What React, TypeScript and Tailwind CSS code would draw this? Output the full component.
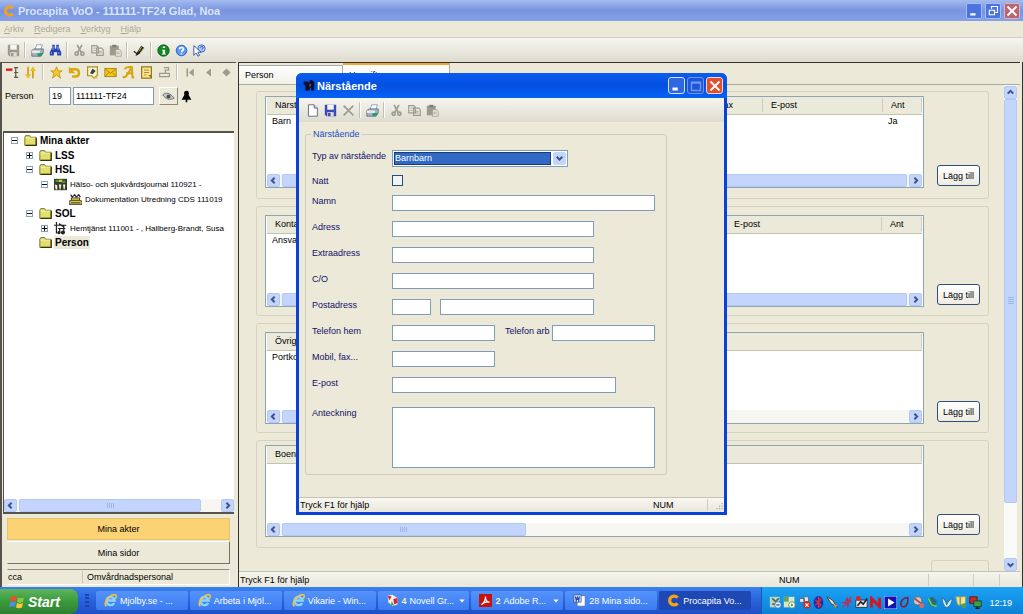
import React from 'react';

type Children = { children?: React.ReactNode };

const Svg = ({ children, size = 'size-[13px]' }: Children & { size?: string }) => (
  <svg viewBox="0 0 16 16" className={`${size} shrink-0`} fill="none" aria-hidden="true">
    {children}
  </svg>
);

/* ---------- Icons ---------- */

const SaveIcon = ({ color = '#9d9b8e' }: { color?: string }) => (
  <Svg>
    <path d="M1 1h14v14H3l-2-2z" fill={color} />
    <path d="M4 1h8v6H4z" fill="#f4f4f0" />
    <path d="M4 10h8v5H4z" fill="#dcdcd6" />
    <path d="M5 11h3v4H5z" fill={color} />
  </Svg>
);

const PrinterIcon = () => (
  <Svg>
    <path d="M5 7l2-6h7l-2 6z" fill="#fff" stroke="#8795a5" />
    <path d="M1 8l3-2h11v5l-3 4H1z" fill="#a9b3bd" stroke="#5d6b7a" />
    <path d="M1 8h10v3H1z" fill="#e5e9ee" />
    <path d="M8 11h7l-2 4H8z" fill="#2a9d6c" />
  </Svg>
);

const BinocularsIcon = () => (
  <Svg>
    <path d="M4 1h3v4l1 1 1-1V1h3v3l3 6v4h-5v-4H6v4H1v-4l3-6z" fill="#2443b5" />
    <path d="M5 3v4M11 3v4M3 10v2M12 10v2" stroke="#b9c9f6" />
  </Svg>
);

const CutIcon = () => (
  <Svg>
    <path d="M5 1l5 9M11 1L6 10" stroke="#9d9b8e" strokeWidth="2" />
    <circle cx="4.500" cy="12" r="2" stroke="#9d9b8e" strokeWidth="2" />
    <circle cx="11.500" cy="12" r="2" stroke="#9d9b8e" strokeWidth="2" />
  </Svg>
);

const CopyIcon = () => (
  <Svg>
    <path d="M1 2h6l2 2v7H1zM7 5h6l2 2v7H7z" fill="#ecebe3" stroke="#9d9b8e" strokeWidth="1.500" />
    <path d="M3 5h4M3 8h3M9 9h4M9 11h4" stroke="#9d9b8e" />
  </Svg>
);

const PasteIcon = () => (
  <Svg>
    <path d="M1 2h11v12H1z" fill="#9d9b8e" />
    <path d="M4 1h5v3H4z" fill="#7f7d72" />
    <path d="M8 7h5l2 2v6H8z" fill="#ecebe3" stroke="#9d9b8e" />
    <path d="M9 10h4M9 12h4" stroke="#9d9b8e" />
  </Svg>
);

const PenIcon = () => (
  <Svg>
    <path d="M3 15l2-5 5-8 4 3-6 7z" fill="#222" />
    <path d="M7 9l4-6M9 11l4-6" stroke="#d8c75a" />
    <path d="M1 9l5 4" stroke="#222" strokeWidth="1.500" />
  </Svg>
);

const InfoIcon = () => (
  <Svg>
    <circle cx="8" cy="8" r="7" fill="#0c8a1d" stroke="#064d0e" />
    <path d="M7 3h3v2H7zM6 7h4v5h1v1H6v-1h1V8H6z" fill="#fff" />
  </Svg>
);

const HelpIcon = () => (
  <Svg>
    <circle cx="8" cy="8" r="6.500" fill="#5a9bf0" stroke="#1b50b8" />
    <path d="M5.500 6.500c0-3 5-3 5 0C10.500 8 8 8 8 10M8 11.500v1.500" stroke="#fff" strokeWidth="2" />
  </Svg>
);

const PointerHelpIcon = () => (
  <Svg>
    <circle cx="10.500" cy="5.500" r="4.500" fill="#a9c8f6" stroke="#2a5bbd" />
    <path d="M9 4.500c0-2 3.500-2 3.500 0 0 1-1.500 1-1.500 2.500" stroke="#1b3f9b" />
    <path d="M1 2v12l3-3 2 4 2-1-2-4h4z" fill="#fff" stroke="#1d3f91" />
  </Svg>
);

const NewIcon = () => (
  <Svg>
    <path d="M3 1h7l4 4v10H3z" fill="#fff" stroke="#47566e" />
    <path d="M10 1v4h4" fill="#cfd9e8" stroke="#47566e" />
  </Svg>
);

const DeleteIcon = () => (
  <Svg>
    <path d="M2 2l12 12M14 2L2 14" stroke="#9d9b8e" strokeWidth="2" />
  </Svg>
);

const TreeToggleIcon = () => (
  <Svg>
    <path d="M0 3h8v3H0z" fill="#e02020" />
    <path d="M10 2h5M12 2v12M10 14h5M10 8h5" stroke="#555" strokeWidth="1.500" />
  </Svg>
);

const SortIcon = () => (
  <Svg>
    <path d="M5 1v13M11 15V2" stroke="#c99a08" strokeWidth="2" />
    <path d="M1 10l4 5 4-5zM7 6l4-5 4 5z" fill="#eebc1e" />
  </Svg>
);

const StarIcon = () => (
  <Svg>
    <path d="M8 1l2 5h5l-4 3 2 6-5-4-5 4 2-6-4-3h5z" fill="#f8cb1c" stroke="#c08d08" />
  </Svg>
);

const UndoIcon = () => (
  <Svg>
    <path d="M3 4h6c6 0 6 9 0 9H5" stroke="#dba90d" strokeWidth="3" />
    <path d="M1 1v8h8z" fill="#dba90d" />
  </Svg>
);

const EditPageIcon = () => (
  <Svg>
    <path d="M2 1h12v10l-4 4-3-3H2z" fill="#fff7c9" stroke="#a8902d" strokeWidth="1.500" />
    <path d="M5 9l3-6 4 3-4 4z" fill="#36405a" />
    <path d="M9 13h5v2H9z" fill="#e1b923" />
  </Svg>
);

const MailIcon = () => (
  <Svg>
    <path d="M1 3h14v10H1z" fill="#f5c51c" stroke="#a37b05" />
    <path d="M1 3l7 6 7-6M1 13l5-5M15 13l-5-5" stroke="#a37b05" />
  </Svg>
);

const ScriptAIcon = () => (
  <Svg>
    <path d="M1 13c3 3 7-4 11-12l1 13h2M5 9h8M3 4c2-3 5-3 9-3" stroke="#d9a50c" strokeWidth="2.500" />
  </Svg>
);

const NoteIcon = () => (
  <Svg>
    <path d="M2 1h12v14H2z" fill="#fae691" stroke="#96781a" strokeWidth="1.500" />
    <path d="M5 5h6M5 8h6M5 11h3" stroke="#96781a" />
    <path d="M10 11h4v4z" fill="#96781a" />
  </Svg>
);

const StampIcon = () => (
  <Svg>
    <path d="M7 2h6v3H9v4M2 9h12v4H2z" stroke="#9d9b8e" strokeWidth="1.500" />
  </Svg>
);

const FirstIcon = () => (
  <Svg>
    <path d="M4 3v10" stroke="#9d9b8e" strokeWidth="2" />
    <path d="M12 3v10L6 8z" fill="#9d9b8e" />
  </Svg>
);

const PrevIcon = () => (
  <Svg>
    <path d="M11 3v10L5 8z" fill="#9d9b8e" />
  </Svg>
);

const DiamondIcon = () => (
  <Svg>
    <path d="M8 3l5 5-5 5-5-5z" fill="#9d9b8e" />
  </Svg>
);

const EyeIcon = () => (
  <Svg>
    <path d="M1 6c4-4 9-2 14 4-5 3-11 1-14-4z" fill="#c9cdd0" stroke="#555b60" />
    <circle cx="8" cy="8" r="2.500" fill="#4b5358" />
  </Svg>
);

const PawnIcon = () => (
  <Svg>
    <circle cx="8" cy="4" r="3" fill="#000" />
    <path d="M6 5h4l4 7H9v3H7v-3H2z" fill="#000" />
  </Svg>
);

const ProcapitaIcon = ({ size }: { size?: string }) => (
  <Svg size={size}>
    <path d="M13 4.500A5.500 5.500 0 1 0 13 11.500" stroke="#f5a21b" strokeWidth="4" />
  </Svg>
);

const FolderIcon = () => (
  <Svg>
    <path d="M1 4l1-2h5l1 2h7v10H1z" fill="#e2e06a" stroke="#5e5c12" />
    <path d="M2 5h12" stroke="#fbfac2" />
    <path d="M15 5v9H2" stroke="#33320a" strokeWidth="1.500" />
  </Svg>
);

const JournalIcon = () => (
  <Svg>
    <path d="M0 1h16v14H0z" fill="#3a3a2c" />
    <path d="M2 2h4v3H2zM10 3h4v3h-4z" fill="#2f9c43" />
    <path d="M6 2h4v3H6z" fill="#e1c52d" />
    <path d="M1 8l3 1v5H2zM6 8h3l-1 6H7zM11 8h3l-1 6h-1z" fill="#f4f2dc" />
  </Svg>
);

const DocumentationIcon = () => (
  <Svg>
    <path d="M2 2l2 3 3-3 2 3 3-3 2 3" stroke="#222" strokeWidth="1.500" />
    <path d="M3 6h10v3l3 1v4H0v-4l3-1z" fill="#d8d04a" stroke="#222" />
    <path d="M3 9h10M2 12h12" stroke="#222" />
  </Svg>
);

const HomeCareIcon = () => (
  <Svg>
    <path d="M3 0v14M0 4h15M6 2l6 4M12 4v9M5 8h9M7 8v6" stroke="#222" strokeWidth="1.500" />
    <circle cx="11" cy="13" r="2.500" fill="#222" />
    <circle cx="6" cy="13" r="2" fill="#222" />
  </Svg>
);

const IeIcon = () => (
  <Svg>
    <path d="M12.500 11A5 5 0 1 1 13 8H4" stroke="#8ad4ff" strokeWidth="3" />
    <path d="M3 15C-2 12 7 0 14 1c2 1 1 3 0 5" stroke="#f3c53a" strokeWidth="2" />
  </Svg>
);

const NovellIcon = () => (
  <Svg>
    <path d="M2 2l6-1 6 4v8l-6 2-5-5z" fill="#f3efe9" />
    <path d="M2 2l5 1-3 5zM9 6l5-1v6l-4 2z" fill="#d22b2b" />
    <path d="M7 9l3 5H6z" fill="#3b9e3b" />
  </Svg>
);

const AdobeIcon = () => (
  <Svg>
    <path d="M0 0h16v16H0z" fill="#c5130f" />
    <path d="M3 13c3-2 5-6 5-10 0 4 2 7 5 7-4-1-7 0-10 3z" stroke="#fff" strokeWidth="1.500" />
  </Svg>
);

const WordIcon = () => (
  <Svg>
    <path d="M5 2h10v13H5z" fill="#fff" stroke="#5671b3" />
    <path d="M1 1h9v9H1z" fill="#e7edfb" stroke="#2a4da3" />
    <path d="M3 3l1 5 1.500-4L7 8l1-5" stroke="#2a4da3" strokeWidth="1.500" />
  </Svg>
);

const WindowsFlag = () => (
  <Svg size="size-4">
    <path d="M2 3c2-1.500 4-1 6 0L7 7.500c-2-1-4-1-6 0z" fill="#e9512b" />
    <path d="M9 3.500c2 1 4 1 6 0L14 8c-2 1-4 1-6 0z" fill="#8cc63f" />
    <path d="M1 8.500c2-1 4-1 6 0L6 13c-2-1-4-1-6 0z" fill="#4d8fe8" />
    <path d="M8 9c2 1 4 1 6 0l-1 4.500c-2 1-4 1-6 0z" fill="#fbc82e" />
  </Svg>
);

/* ---------- Shared controls ---------- */

const ToolButton = ({ label, children }: Children & { label: string }) => (
  <button type="button" aria-label={label} title={label} className="flex h-[18px] w-[18px] shrink-0 items-center justify-center">
    {children}
  </button>
);

const Divider = ({ wide = false }: { wide?: boolean }) => (
  <span className={`h-4 w-[2px] shrink-0 border-l border-r border-l-[#c3c0b0] border-r-white ${wide ? 'mx-[3px]' : 'mx-[2px]'}`} />
);

const Arrow = ({ dir }: { dir: 'left' | 'right' | 'up' | 'down' }) => {
  const paths = {
    left: 'M10 3L5 8l5 5',
    right: 'M6 3l5 5-5 5',
    up: 'M3 10l5-5 5 5',
    down: 'M3 6l5 5 5-5',
  };
  return (
    <button type="button" aria-label={`Scroll ${dir}`} className="flex size-[13px] shrink-0 items-center justify-center rounded-[2px] border border-[#b4c8f6] bg-[#c4d5fd]">
      <Svg size="size-[9px]">
        <path d={paths[dir]} stroke="#3f5484" strokeWidth="3.500" />
      </Svg>
    </button>
  );
};

const HScrollbar = ({ thumb, grip = false }: { thumb: number; grip?: boolean }) => (
  <div className="flex h-[13px] items-center gap-[2px] bg-[#f7f6f2]">
    <Arrow dir="left" />
    <div className="flex-1">
      <div
        className="flex h-[13px] items-center justify-center gap-px rounded-[2px] border border-[#b4c8f6] bg-[#c4d5fd]"
        style={{ width: `${thumb}%` }}
      >
        {grip && [0, 1, 2, 3].map((i) => <span key={i} className="h-[5px] w-px bg-[#9db5ee]" />)}
      </div>
    </div>
    <Arrow dir="right" />
  </div>
);

/* ---------- Main window ---------- */

const TitleBar = () => (
  <header className="flex h-[21px] shrink-0 items-center bg-linear-to-b from-[#a3bbee] via-[#7a94e0] to-[#84a2e8] px-[3px]">
    <ProcapitaIcon size="size-3" />
    <h1 className="ml-[3px] flex-1 text-[11px] font-bold text-[#dbe5fa]">Procapita VoO - 111111-TF24 Glad, Noa</h1>
    <div className="flex gap-[3px]">
      <button type="button" aria-label="Minimize" className="flex size-4 items-center justify-center rounded-[2px] border border-[#a9bdf3] bg-[#4c74e0]">
        <Svg size="size-3"><path d="M3 11h7v3H3z" fill="#fff" /></Svg>
      </button>
      <button type="button" aria-label="Restore" className="flex size-4 items-center justify-center rounded-[2px] border border-[#a9bdf3] bg-[#4c74e0]">
        <Svg size="size-3"><path d="M6 5V2h8v8h-3M3 7h7v6H3z" stroke="#fff" strokeWidth="1.500" /></Svg>
      </button>
      <button type="button" aria-label="Close" className="flex size-4 items-center justify-center rounded-[2px] border border-[#d8b5c6] bg-[#b96572]">
        <Svg size="size-3"><path d="M2 2l12 12M14 2L2 14" stroke="#fff" strokeWidth="2.500" /></Svg>
      </button>
    </div>
  </header>
);

const MenuBar = () => (
  <nav className="flex h-[17px] shrink-0 items-center gap-[10px] border-b border-[#d0cdbd] px-1 text-[#aca899]">
    {['Arkiv', 'Redigera', 'Verktyg', 'Hjälp'].map((item) => (
      <button key={item} type="button">
        <span className="underline">{item[0]}</span>
        {item.slice(1)}
      </button>
    ))}
  </nav>
);

const MainToolbar = () => (
  <div className="flex h-6 shrink-0 items-center bg-linear-to-b from-[#f6f5f0] to-[#dedccf] px-1">
    <ToolButton label="Spara"><SaveIcon /></ToolButton>
    <Divider />
    <ToolButton label="Skriv ut"><PrinterIcon /></ToolButton>
    <ToolButton label="Sök"><BinocularsIcon /></ToolButton>
    <Divider />
    <ToolButton label="Klipp ut"><CutIcon /></ToolButton>
    <ToolButton label="Kopiera"><CopyIcon /></ToolButton>
    <ToolButton label="Klistra in"><PasteIcon /></ToolButton>
    <Divider />
    <ToolButton label="Signera"><PenIcon /></ToolButton>
    <Divider />
    <ToolButton label="Information"><InfoIcon /></ToolButton>
    <ToolButton label="Hjälp"><HelpIcon /></ToolButton>
    <ToolButton label="Förklaring"><PointerHelpIcon /></ToolButton>
  </div>
);

/* ---------- Left panel ---------- */

interface TreeNode {
  label: string;
  icon: React.ReactNode;
  state?: 'open' | 'closed';
  bold?: boolean;
  selected?: boolean;
  items?: TreeNode[];
}

const tree: TreeNode[] = [
  {
    label: 'Mina akter',
    icon: <FolderIcon />,
    state: 'open',
    bold: true,
    items: [
      { label: 'LSS', icon: <FolderIcon />, state: 'closed', bold: true },
      {
        label: 'HSL',
        icon: <FolderIcon />,
        state: 'open',
        bold: true,
        items: [
          {
            label: 'Hälso- och sjukvårdsjournal 110921 -',
            icon: <JournalIcon />,
            state: 'open',
            items: [{ label: 'Dokumentation Utredning CDS 111019', icon: <DocumentationIcon /> }],
          },
        ],
      },
      {
        label: 'SOL',
        icon: <FolderIcon />,
        state: 'open',
        bold: true,
        items: [{ label: 'Hemtjänst 111001 - , Hallberg-Brandt, Susa', icon: <HomeCareIcon />, state: 'closed' }],
      },
      { label: 'Person', icon: <FolderIcon />, bold: true, selected: true },
    ],
  },
];

const TreeItem = ({ node }: { node: TreeNode }) => (
  <li>
    <div className="flex h-[14px] items-center whitespace-nowrap">
      {node.state ? (
        <button type="button" aria-label={node.label} className="flex size-[7px] shrink-0 items-center justify-center border border-[#8ea0b8] bg-white">
          <Svg size="size-[5px]">
            <path d={node.state === 'open' ? 'M0 8h16' : 'M0 8h16M8 0v16'} stroke="#000" strokeWidth="3" />
          </Svg>
        </button>
      ) : (
        <span className="w-[7px] shrink-0" />
      )}
      <span className="ml-[6px] mr-[2px] flex shrink-0">{node.icon}</span>
      <span className={`px-px leading-[13px] ${node.bold ? 'text-[10px] font-bold' : 'text-[8px]'} ${node.selected ? 'bg-[#ece9d8]' : ''}`}>
        {node.label}
      </span>
    </div>
    {node.items && (
      <ul className="pl-[15px] pt-px">
        {node.items.map((n) => (
          <TreeItem key={n.label} node={n} />
        ))}
      </ul>
    )}
  </li>
);

const LeftPanel = () => (
  <aside className="flex w-[236px] shrink-0 flex-col border-l-2 border-t border-[#55534a] pl-px pr-[2px]">
    <div className="flex h-[18px] shrink-0 items-center">
      <ToolButton label="Trädvy"><TreeToggleIcon /></ToolButton>
      <ToolButton label="Sortera"><SortIcon /></ToolButton>
      <Divider wide />
      <ToolButton label="Favorit"><StarIcon /></ToolButton>
      <ToolButton label="Ångra"><UndoIcon /></ToolButton>
      <ToolButton label="Redigera"><EditPageIcon /></ToolButton>
      <ToolButton label="Meddelande"><MailIcon /></ToolButton>
      <ToolButton label="Text"><ScriptAIcon /></ToolButton>
      <ToolButton label="Anteckning"><NoteIcon /></ToolButton>
      <ToolButton label="Stämpel"><StampIcon /></ToolButton>
      <Divider wide />
      <ToolButton label="Första"><FirstIcon /></ToolButton>
      <ToolButton label="Föregående"><PrevIcon /></ToolButton>
      <ToolButton label="Nästa"><DiamondIcon /></ToolButton>
    </div>

    <div className="mt-[6px] flex items-center pl-[2px]">
      <label htmlFor="person-century" className="w-11">Person</label>
      <input id="person-century" defaultValue="19" className="h-[18px] w-[22px] border border-[#7f9db9] bg-white px-[2px]" />
      <input aria-label="Personnummer" defaultValue="111111-TF24" className="ml-[2px] h-[18px] w-[81px] border border-[#7f9db9] bg-white px-[2px]" />
      <button type="button" aria-label="Visa" className="ml-[5px] flex h-[18px] w-[19px] items-center justify-center border border-b-[#8a887b] border-l-white border-r-[#8a887b] border-t-white">
        <EyeIcon />
      </button>
      <span className="ml-[2px]"><PawnIcon /></span>
    </div>

    <div className="mt-[26px] flex min-h-0 flex-1 flex-col overflow-hidden border-b-2 border-l border-t-2 border-[#55534a] bg-white">
      <ul className="flex-1 overflow-hidden pl-[7px]">
        {tree.map((n) => (
          <TreeItem key={n.label} node={n} />
        ))}
      </ul>
      <HScrollbar thumb={91} grip />
    </div>

    <div className="mt-1 flex flex-col px-1">
      <button type="button" className="h-[22px] border border-[#e5c367] bg-[#fbd374]">Mina akter</button>
      <button type="button" className="mt-px h-[23px] border border-b-[#77756a] border-l-[#ece9d8] border-r-[#77756a] border-t-white">Mina sidor</button>
    </div>
    <div className="mx-1 mb-[2px] mt-[5px] flex h-[16px] items-center border border-b-white border-l-[#ece9d8] border-r-white border-t-[#8f8d80]">
      <span className="w-[75px] border-r border-[#c9c6b6]">cca</span>
      <span className="pl-1">Omvårdnadspersonal</span>
    </div>
  </aside>
);

/* ---------- Right panel ---------- */

interface ListGroup {
  id: string;
  columns: { label: string; width?: number }[];
  row?: string[];
  thumb: number;
  roomy?: boolean;
  grip?: boolean;
}

const groups: ListGroup[] = [
  {
    id: 'relatives',
    columns: [{ label: 'Närstående' }, { label: 'Fax', width: 53 }, { label: 'E-post', width: 120 }, { label: 'Ant', width: 39 }],
    row: ['Barn', '', '', 'Ja'],
    thumb: 100,
  },
  {
    id: 'contacts',
    columns: [{ label: 'Kontakt' }, { label: 'E-post', width: 156 }, { label: 'Ant', width: 40 }],
    row: ['Ansvarig', '', ''],
    thumb: 100,
    roomy: true,
  },
  { id: 'other', columns: [{ label: 'Övriga' }], row: ['Portkod'], thumb: 60, roomy: true },
  { id: 'living', columns: [{ label: 'Boende' }], thumb: 39, grip: true },
];

const ListSection = ({ group }: { group: ListGroup }) => (
  <section className={`flex items-end gap-[13px] rounded-[3px] border border-[#d5d2c0] px-2 ${group.roomy ? 'py-2' : 'pb-[10px] pt-1'}`}>
    <div className="flex h-[92px] min-w-0 flex-1 flex-col border border-[#8fa5ae] bg-white px-px">
      <div className="flex-1">
        <table className="w-full table-fixed border-collapse text-left">
          <colgroup>
            {group.columns.map((c) => (
              <col key={c.label} style={c.width ? { width: c.width } : undefined} />
            ))}
          </colgroup>
          <thead>
            <tr className="h-[17px] border-b border-[#c5c2ae] bg-[#ebe9da]">
              {group.columns.map((c) => (
                <th key={c.label} className="p-0 font-normal">
                  <span className="block border-r border-[#cfccba] pl-2 leading-[14px]">{c.label}</span>
                </th>
              ))}
            </tr>
          </thead>
          <tbody>
            {group.row && (
              <tr>
                {group.row.map((cell, i) => (
                  <td key={i} className="p-0 pl-[5px] leading-3">{cell}</td>
                ))}
              </tr>
            )}
          </tbody>
        </table>
      </div>
      <HScrollbar thumb={group.thumb} grip={group.grip} />
    </div>
    <button type="button" className="mb-[2px] h-[21px] w-[43px] shrink-0 rounded-[3px] border border-[#2f4f78] bg-linear-to-b from-white to-[#eeece2]">
      Lägg till
    </button>
  </section>
);

const RightPanel = () => (
  <main className="ml-[2px] mr-[2px] flex min-w-0 flex-1 flex-col border-l border-t border-[#33322c]">
    <div className="flex h-[22px] shrink-0 items-end border-b border-[#a9aca0]" role="tablist">
      <button type="button" role="tab" aria-selected="false" className="h-[19px] w-[104px] border-r border-t border-[#a9b0aa] bg-linear-to-b from-white to-[#f1f0e8] pl-[6px] text-left">
        Person
      </button>
      <button type="button" role="tab" aria-selected="true" className="h-[21px] w-[107px] border-r border-t-2 border-r-[#a9b0aa] border-t-[#f0a63a] bg-[#fbfbf8] pl-[6px] text-left">
        Uppgifter person
      </button>
    </div>
    <div className="flex min-h-0 flex-1">
      <div className="flex min-w-0 flex-1 flex-col gap-[7px] overflow-hidden pl-[17px] pr-[15px] pt-[6px]">
        {groups.map((g) => (
          <ListSection key={g.id} group={g} />
        ))}
        <div className="mt-[5px] min-h-3 w-[58px] flex-1 self-end rounded-t-[3px] border border-b-0 border-[#d5d2c0]" />
      </div>
      <div className="mr-[3px] flex w-[13px] flex-col bg-[#f9f9f7] pt-px">
        <Arrow dir="up" />
        <div className="flex-1">
          <div className="flex h-[88%] flex-col items-center justify-center gap-px rounded-[2px] border border-[#b4c8f6] bg-[#c4d5fd]">
            {[0, 1, 2, 3].map((i) => <span key={i} className="h-px w-[6px] bg-[#9db5ee]" />)}
          </div>
        </div>
        <Arrow dir="down" />
      </div>
    </div>
    <footer className="flex h-[16px] shrink-0 items-center border-t border-[#c5c2b2] bg-linear-to-b from-[#f5f4ee] to-[#e9e7da] pr-5">
      <span className="flex-1 pl-px">Tryck F1 för hjälp</span>
      <span className="w-[149px]">NUM</span>
      <span className="h-3 w-[46px] border-l border-r border-[#cfccba]" />
      <span className="h-3 w-[26px] border-r border-[#cfccba]" />
    </footer>
  </main>
);

/* ---------- Dialog ---------- */

const box = 'h-4 border border-[#7f9db9] bg-white px-[2px] text-black';

const Row = ({ label, id, children }: Children & { label: string; id: string }) => (
  <div className="flex items-start">
    <label htmlFor={id} className="w-20 shrink-0 whitespace-nowrap leading-3">{label}</label>
    {children}
  </div>
);

const RelativeDialog = () => (
  <div role="dialog" aria-label="Närstående" className="absolute left-[296px] top-[73px] flex w-[431px] flex-col rounded-t-[6px] border-[3px] border-t-0 border-[#0842d8] bg-[#ece9d8]">
    <div className="-mx-[3px] flex h-[25px] items-center rounded-t-[6px] bg-linear-to-b from-[#0a5df0] via-[#0450e0] to-[#0562f8] pl-[6px] pr-1">
      <Svg>
        <path d="M2 3h5l2 2V2l3-1 3 3v10h-4V9L9 14H4V8L2 7z" fill="#0c1030" />
        <path d="M9 6h2v3H9z" fill="#a44a3a" />
      </Svg>
      <h2 className="ml-[2px] flex-1 text-[11px] font-bold text-white">Närstående</h2>
      <div className="flex gap-[2px]">
        <button type="button" aria-label="Minimera" className="flex size-[17px] items-center justify-center rounded-[3px] border border-[#d5e0fb] bg-[#2f66e4]">
          <Svg size="size-3"><path d="M2 10h7v4H2z" fill="#fff" /></Svg>
        </button>
        <button type="button" aria-label="Maximera" className="flex size-[17px] items-center justify-center rounded-[3px] border border-[#6c96ee] bg-[#1c55d8]">
          <Svg size="size-3"><path d="M2 3h12v11H2zM2 4h12" stroke="#6d98f0" strokeWidth="2" /></Svg>
        </button>
        <button type="button" aria-label="Stäng" className="flex size-[17px] items-center justify-center rounded-[3px] border border-[#f6d2c8] bg-[#e0512e]">
          <Svg size="size-3"><path d="M2 2l12 12M14 2L2 14" stroke="#fff" strokeWidth="2.500" /></Svg>
        </button>
      </div>
    </div>

    <div className="flex h-6 items-center bg-linear-to-b from-[#f6f5f0] to-[#dedccf] px-1">
      <ToolButton label="Ny"><NewIcon /></ToolButton>
      <ToolButton label="Spara"><SaveIcon color="#3f46b8" /></ToolButton>
      <ToolButton label="Ta bort"><DeleteIcon /></ToolButton>
      <Divider />
      <ToolButton label="Skriv ut"><PrinterIcon /></ToolButton>
      <Divider />
      <ToolButton label="Klipp ut"><CutIcon /></ToolButton>
      <ToolButton label="Kopiera"><CopyIcon /></ToolButton>
      <ToolButton label="Klistra in"><PasteIcon /></ToolButton>
    </div>

    <fieldset className="ml-[6px] mr-[57px] mt-[6px] rounded-[3px] border border-[#d0cdbb] pb-[6px] pl-[6px] text-[#10106a]">
      <legend className="-ml-px px-[2px] leading-3 text-[#1c4fc4]">Närstående</legend>
      <div className="mt-[10px] flex flex-col gap-2">
        <Row label="Typ av närstående" id="relation">
          <div className="flex h-[17px] w-[176px] items-center gap-[2px] border border-[#7f9db9] bg-white px-px">
            <select id="relation" className="h-[13px] min-w-0 flex-1 appearance-none border border-[#1d3c70] bg-[#316ac5] leading-[11px] text-white">
              <option>Barnbarn</option>
            </select>
            <span className="pointer-events-none flex size-[13px] items-center justify-center rounded-[2px] bg-[#c4d5fd]">
              <Svg size="size-[9px]"><path d="M3 5l5 5 5-5" stroke="#3f5484" strokeWidth="3.500" /></Svg>
            </span>
          </div>
        </Row>
        <Row label="Natt" id="night">
          <input id="night" type="checkbox" className="size-[11px] appearance-none border border-[#1c5180] bg-[#f3f3ef]" />
        </Row>
      </div>
      <div className="mt-2 flex flex-col gap-[10px]">
        <Row label="Namn" id="name"><input id="name" className={`${box} w-[263px]`} /></Row>
        <Row label="Adress" id="address"><input id="address" className={`${box} w-[202px]`} /></Row>
        <Row label="Extraadress" id="extra"><input id="extra" className={`${box} w-[202px]`} /></Row>
        <Row label="C/O" id="co"><input id="co" className={`${box} w-[202px]`} /></Row>
        <Row label="Postadress" id="zip">
          <input id="zip" className={`${box} w-[39px]`} />
          <input aria-label="Postort" className={`${box} ml-[9px] w-[154px]`} />
        </Row>
        <Row label="Telefon hem" id="phone-home">
          <input id="phone-home" className={`${box} w-[103px]`} />
          <label htmlFor="phone-work" className="ml-[10px] w-[47px] whitespace-nowrap leading-3">Telefon arb</label>
          <input id="phone-work" className={`${box} w-[103px]`} />
        </Row>
        <Row label="Mobil, fax..." id="mobile"><input id="mobile" className={`${box} w-[103px]`} /></Row>
        <Row label="E-post" id="email"><input id="email" className={`${box} w-[224px]`} /></Row>
        <div className="mt-1">
          <Row label="Anteckning" id="note">
            <textarea id="note" className="h-[61px] w-[263px] resize-none border border-[#7f9db9] bg-white p-[2px] text-black" />
          </Row>
        </div>
      </div>
    </fieldset>

    <footer className="mt-[22px] flex h-[15px] items-center border-t border-[#c5c2b2] bg-linear-to-b from-[#f8f7f2] to-[#e9e7da]">
      <span className="flex-1 pl-px">Tryck F1 för hjälp</span>
      <span className="w-[54px]">NUM</span>
      <span className="flex h-3 w-[17px] items-end justify-end border-l border-[#cfccba]">
        <Svg size="size-[10px]"><path d="M12 3h2v2h-2zM8 7h2v2H8zM12 7h2v2h-2zM4 11h2v2H4zM8 11h2v2H8zM12 11h2v2h-2z" fill="#b5b29f" /></Svg>
      </span>
    </footer>
  </div>
);

/* ---------- Taskbar ---------- */

const tasks: { label: string; icon: React.ReactNode; count?: string; menu?: boolean; active?: boolean }[] = [
  { label: 'Mjolby.se - ...', icon: <IeIcon /> },
  { label: 'Arbeta i Mjöl...', icon: <IeIcon /> },
  { label: 'Vikarie - Win...', icon: <IeIcon /> },
  { label: 'Novell Gr...', icon: <NovellIcon />, count: '4', menu: true },
  { label: 'Adobe R...', icon: <AdobeIcon />, count: '2', menu: true },
  { label: '28 Mina sido...', icon: <WordIcon /> },
  { label: 'Procapita Vo...', icon: <ProcapitaIcon />, active: true },
];

const trayIcons: React.ReactNode[] = [
  <><path d="M1 1h12v13H1z" fill="#b9d6c0" /><path d="M4 3l4 4 4-4M4 10h6" stroke="#47745a" strokeWidth="2" /><circle cx="11" cy="11" r="4" fill="#eef4fb" stroke="#366bb8" /><path d="M9 11h4" stroke="#366bb8" strokeWidth="2" /></>,
  <><path d="M1 1h13v13H1z" fill="#d7e8c8" /><path d="M1 1h6v6H1z" fill="#64a25c" /><circle cx="11" cy="11" r="4" fill="#fff" stroke="#3d8d3d" /><path d="M10 9l3 2-3 2z" fill="#3d8d3d" /></>,
  <><path d="M2 3h6v5H2zM7 1h6v6H7z" fill="#dfe7ee" stroke="#4d6070" /><circle cx="11" cy="11" r="4.500" fill="#d6281c" /><path d="M9 9l4 4M13 9l-4 4" stroke="#fff" strokeWidth="1.500" /></>,
  <><ellipse cx="8" cy="8" rx="6" ry="8" fill="#1a2fb4" /><path d="M4 5l7 6-3 3V2l3 3-7 6" stroke="#e3342b" strokeWidth="1.500" /></>,
  <><path d="M1 1l7 4 6 9-8-5z" fill="#e4dcc1" stroke="#333" /><path d="M9 10l5 1-2 4z" fill="#dc932a" /></>,
  <path key="wave" d="M1 8h4l3-6v12l3-10 2 4M2 14L13 1" stroke="#bf2d50" strokeWidth="1.500" />,
  <><path d="M1 5h14v9H1z" fill="#eee" stroke="#222" /><path d="M3 12l4-5 3 3 5-7" stroke="#222" strokeWidth="2" /><circle cx="4" cy="3" r="3" fill="#d8262b" /></>,
  <path key="n" d="M3 14V3l10 10V2" stroke="#d8151c" strokeWidth="3.500" />,
  <><path d="M0 0h16v16H0z" fill="#1014b8" stroke="#fff" /><path d="M5 3l8 5-8 5z" fill="#fff" /></>,
  <path key="loop" d="M12 2C6 2 2 7 4 12c4 4 9-1 8-10z" stroke="#7a2444" strokeWidth="2" />,
  <><circle cx="7" cy="6" r="5" fill="#c8c8c8" stroke="#666" /><path d="M3 3l8 6" stroke="#c8372d" strokeWidth="2" /><circle cx="12" cy="12" r="3" fill="#d86c63" /></>,
  <><path d="M2 3l6-2 6 5-4 8-5-2z" fill="#2f6a7c" /><path d="M3 3l4 8 6 2" stroke="#5fd84d" strokeWidth="2" /></>,
  <path key="bird" d="M1 2c3 1 5 5 6 9 2-5 4-6 7-8-1 6-3 10-7 11C3 13 2 7 1 2z" fill="#cfe8ee" stroke="#26607a" />,
  <><path d="M1 1h5v11l-3-2zM7 1h6v7l-3 4-3-2z" fill="#efe6a2" stroke="#b49a2d" /><circle cx="11" cy="12" r="3" fill="#4ca24a" /></>,
  <><path d="M1 1h9v8H1z" fill="#d3281f" stroke="#4c120e" /><path d="M6 6h9v7H6z" fill="#3aa344" stroke="#143d19" /><path d="M8 15h5" stroke="#111" strokeWidth="2" /></>,
];

const Taskbar = () => (
  <div className="flex h-[27px] shrink-0 items-stretch bg-linear-to-b from-[#3a80ee] via-[#2a62dc] to-[#1f4fc6] text-white">
    <button type="button" className="mt-[2px] flex w-[78px] items-center gap-[3px] rounded-r-[8px] bg-linear-to-b from-[#5fb55d] via-[#3a9a3c] to-[#2f7f30] pl-[9px] text-[14px] font-bold italic">
      <WindowsFlag />
      Start
    </button>
    <span className="mx-[7px] my-[7px] w-[3px] border-l-2 border-r-2 border-dotted border-[#1b44ae]" />
    <div className="flex min-w-0 flex-1 gap-[2px] py-[4px]">
      {tasks.map((t) => (
        <button
          key={t.label}
          type="button"
          className={`flex min-w-0 flex-1 items-center gap-[3px] whitespace-nowrap rounded-[2px] pl-2 pr-1 text-left ${t.active ? 'bg-[#1e48b4]' : 'bg-linear-to-b from-[#5593fa] to-[#3a7bf2]'}`}
        >
          {t.icon}
          {t.count && <span className="font-bold text-[#f2ecb0]">{t.count}</span>}
          <span className="flex-1">{t.label}</span>
          {t.menu && <Svg size="size-[6px]"><path d="M1 4h14L8 12z" fill="#fff" /></Svg>}
        </button>
      ))}
    </div>
    <div className="ml-[10px] flex w-[262px] items-center border-l border-[#0c5cb8] bg-linear-to-b from-[#1fa2f2] via-[#1292e8] to-[#0e80d4] pl-[7px] pr-[11px] pt-1">
      <div className="flex flex-1 justify-between">
        {trayIcons.map((icon, i) => (
          <Svg key={i}>{icon}</Svg>
        ))}
      </div>
      <time className="ml-[7px]">12:19</time>
    </div>
  </div>
);

export default function App() {
  return (
    <div className="relative flex h-screen min-h-[600px] flex-col overflow-hidden bg-[#ece9d8] font-['Liberation_Sans',Arial,sans-serif] text-[9px] leading-3 text-black">
      <TitleBar />
      <MenuBar />
      <MainToolbar />
      <div className="flex min-h-0 flex-1 border-r border-[#33322c]">
        <LeftPanel />
        <RightPanel />
      </div>
      <Taskbar />
      <RelativeDialog />
    </div>
  );
}
